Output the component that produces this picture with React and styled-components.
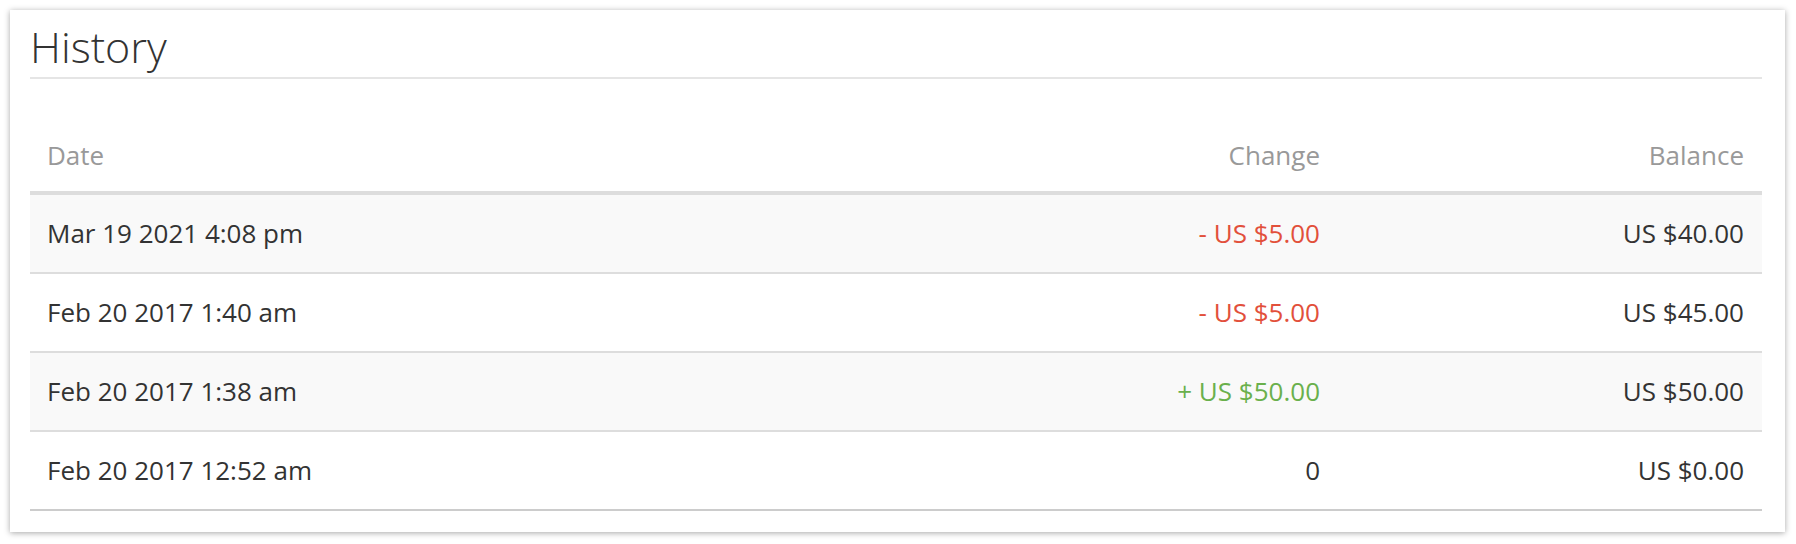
import React from 'react'
import styled, { createGlobalStyle } from 'styled-components'

const rows = [
    { date: 'Mar 19 2021 4:08 pm', change: '- US $5.00', kind: 'minus', balance: 'US $40.00' },
    { date: 'Feb 20 2017 1:40 am', change: '- US $5.00', kind: 'minus', balance: 'US $45.00' },
    { date: 'Feb 20 2017 1:38 am', change: '+ US $50.00', kind: 'plus', balance: 'US $50.00' },
    { date: 'Feb 20 2017 12:52 am', change: '0', kind: 'none', balance: 'US $0.00' },
]

function App() {
    return (
        <>
            <GlobalStyle />
            <Page>
                <Card>
                    <Title>History</Title>
                    <Table>
                        <colgroup>
                            <col />
                            <col width="424" />
                            <col width="424" />
                        </colgroup>
                        <thead>
                            <tr>
                                <HeadCell>Date</HeadCell>
                                <HeadCell $right>Change</HeadCell>
                                <HeadCell $right>Balance</HeadCell>
                            </tr>
                        </thead>
                        <tbody>
                            {rows.map((r, i) => (
                                <Row key={i} $striped={i % 2 === 0} $last={i === rows.length - 1}>
                                    <Cell>{r.date}</Cell>
                                    <Cell $right $kind={r.kind}>{r.change}</Cell>
                                    <Cell $right>{r.balance}</Cell>
                                </Row>
                            ))}
                        </tbody>
                    </Table>
                </Card>
            </Page>
        </>
    )
}

export default App

const GlobalStyle = createGlobalStyle`
    body {
        margin: 0;
        background: #fff;
        font-family: "Open Sans", "Liberation Sans", sans-serif;
        color: #333;
    }
`

const Page = styled.div`
    padding: 10px 11px 10px 10px;
`

const Card = styled.div`
    background: #fff;
    box-shadow: 0 1px 6px rgba(0, 0, 0, 0.35);
    padding: 0 23px 21px 20px;
`

const Title = styled.h1`
    margin: 0;
    padding: 13px 0 7px 0;
    font-size: 43px;
    font-weight: 300;
    line-height: 47px;
    color: #333;
    border-bottom: 2px solid #e5e5e5;
`

const Table = styled.table`
    width: 100%;
    margin-top: 38px;
    border-collapse: separate;
    border-spacing: 0;
    table-layout: fixed;
    font-size: 26px;
    line-height: 37px;
`

const HeadCell = styled.th`
    padding: 20px 18px 17px 17px;
    text-align: ${p => (p.$right ? 'right' : 'left')};
    font-weight: 400;
    color: #999;
    border-bottom: 4px solid #ddd;
`

const Row = styled.tr`
    background: ${p => (p.$striped ? '#f9f9f9' : '#fff')};

    td {
        border-bottom: 2px solid ${p => (p.$last ? '#ccc' : '#ddd')};
    }
`

const changeColors = {
    minus: '#e2503b',
    plus: '#6ab04c',
    none: '#333',
}

const Cell = styled.td`
    padding: 20px 18px 20px 17px;
    text-align: ${p => (p.$right ? 'right' : 'left')};
    color: ${p => changeColors[p.$kind] || '#333'};
    white-space: nowrap;
`
